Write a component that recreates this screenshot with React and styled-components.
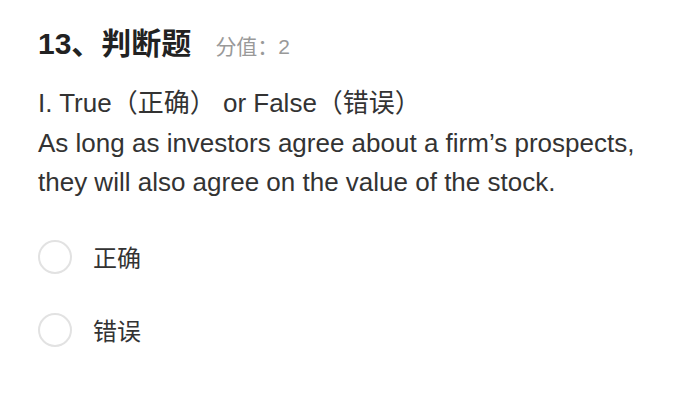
import React from 'react';
import styled, { createGlobalStyle } from 'styled-components';

const Global = createGlobalStyle`
    html, body {
        margin: 0;
        background: #fff;
    }
    body {
        font-family: "Liberation Sans", "Noto Sans CJK SC", sans-serif;
    }
`

const Page = styled.div`
    width: 700px;
    height: 417px;
    padding: 24px 38px 0;
    box-sizing: border-box;
`

const Header = styled.div`
    display: flex;
    align-items: baseline;
    height: 40px;
    line-height: 40px;
`

const Title = styled.h2`
    margin: 0;
    font-size: 30px;
    font-weight: 700;
    color: #222;
`

const Score = styled.span`
    margin-left: 24px;
    font-size: 21px;
    color: #999;
`

const Stem = styled.div`
    margin-top: 20px;
    font-size: 26px;
    line-height: 39.5px;
    color: #333;
`

const Options = styled.div`
    display: flex;
    flex-direction: column;
    gap: 39px;
    margin-top: 37px;
`

const Option = styled.label`
    display: flex;
    align-items: center;
    height: 34px;
    font-size: 24px;
    color: #333;
    cursor: pointer;
`

const Radio = styled.span`
    width: 30px;
    height: 30px;
    border-radius: 50%;
    border: 2px solid ${p => (p.checked ? '#4a90e2' : '#e2e2e2')};
    margin-right: 21px;
    flex-shrink: 0;
`

const options = ['正确', '错误']

export default function App() {
    return (
        <Page>
            <Global />
            <Header>
                <Title>13、判断题</Title>
                <Score>分值：2</Score>
            </Header>
            <Stem>
                <div>I. True（正确） or False（错误）</div>
                <div>As long as investors agree about a firm’s prospects,</div>
                <div>they will also agree on the value of the stock.</div>
            </Stem>
            <Options>
                {options.map(o => (
                    <Option key={o}>
                        <Radio />
                        {o}
                    </Option>
                ))}
            </Options>
        </Page>
    );
}
